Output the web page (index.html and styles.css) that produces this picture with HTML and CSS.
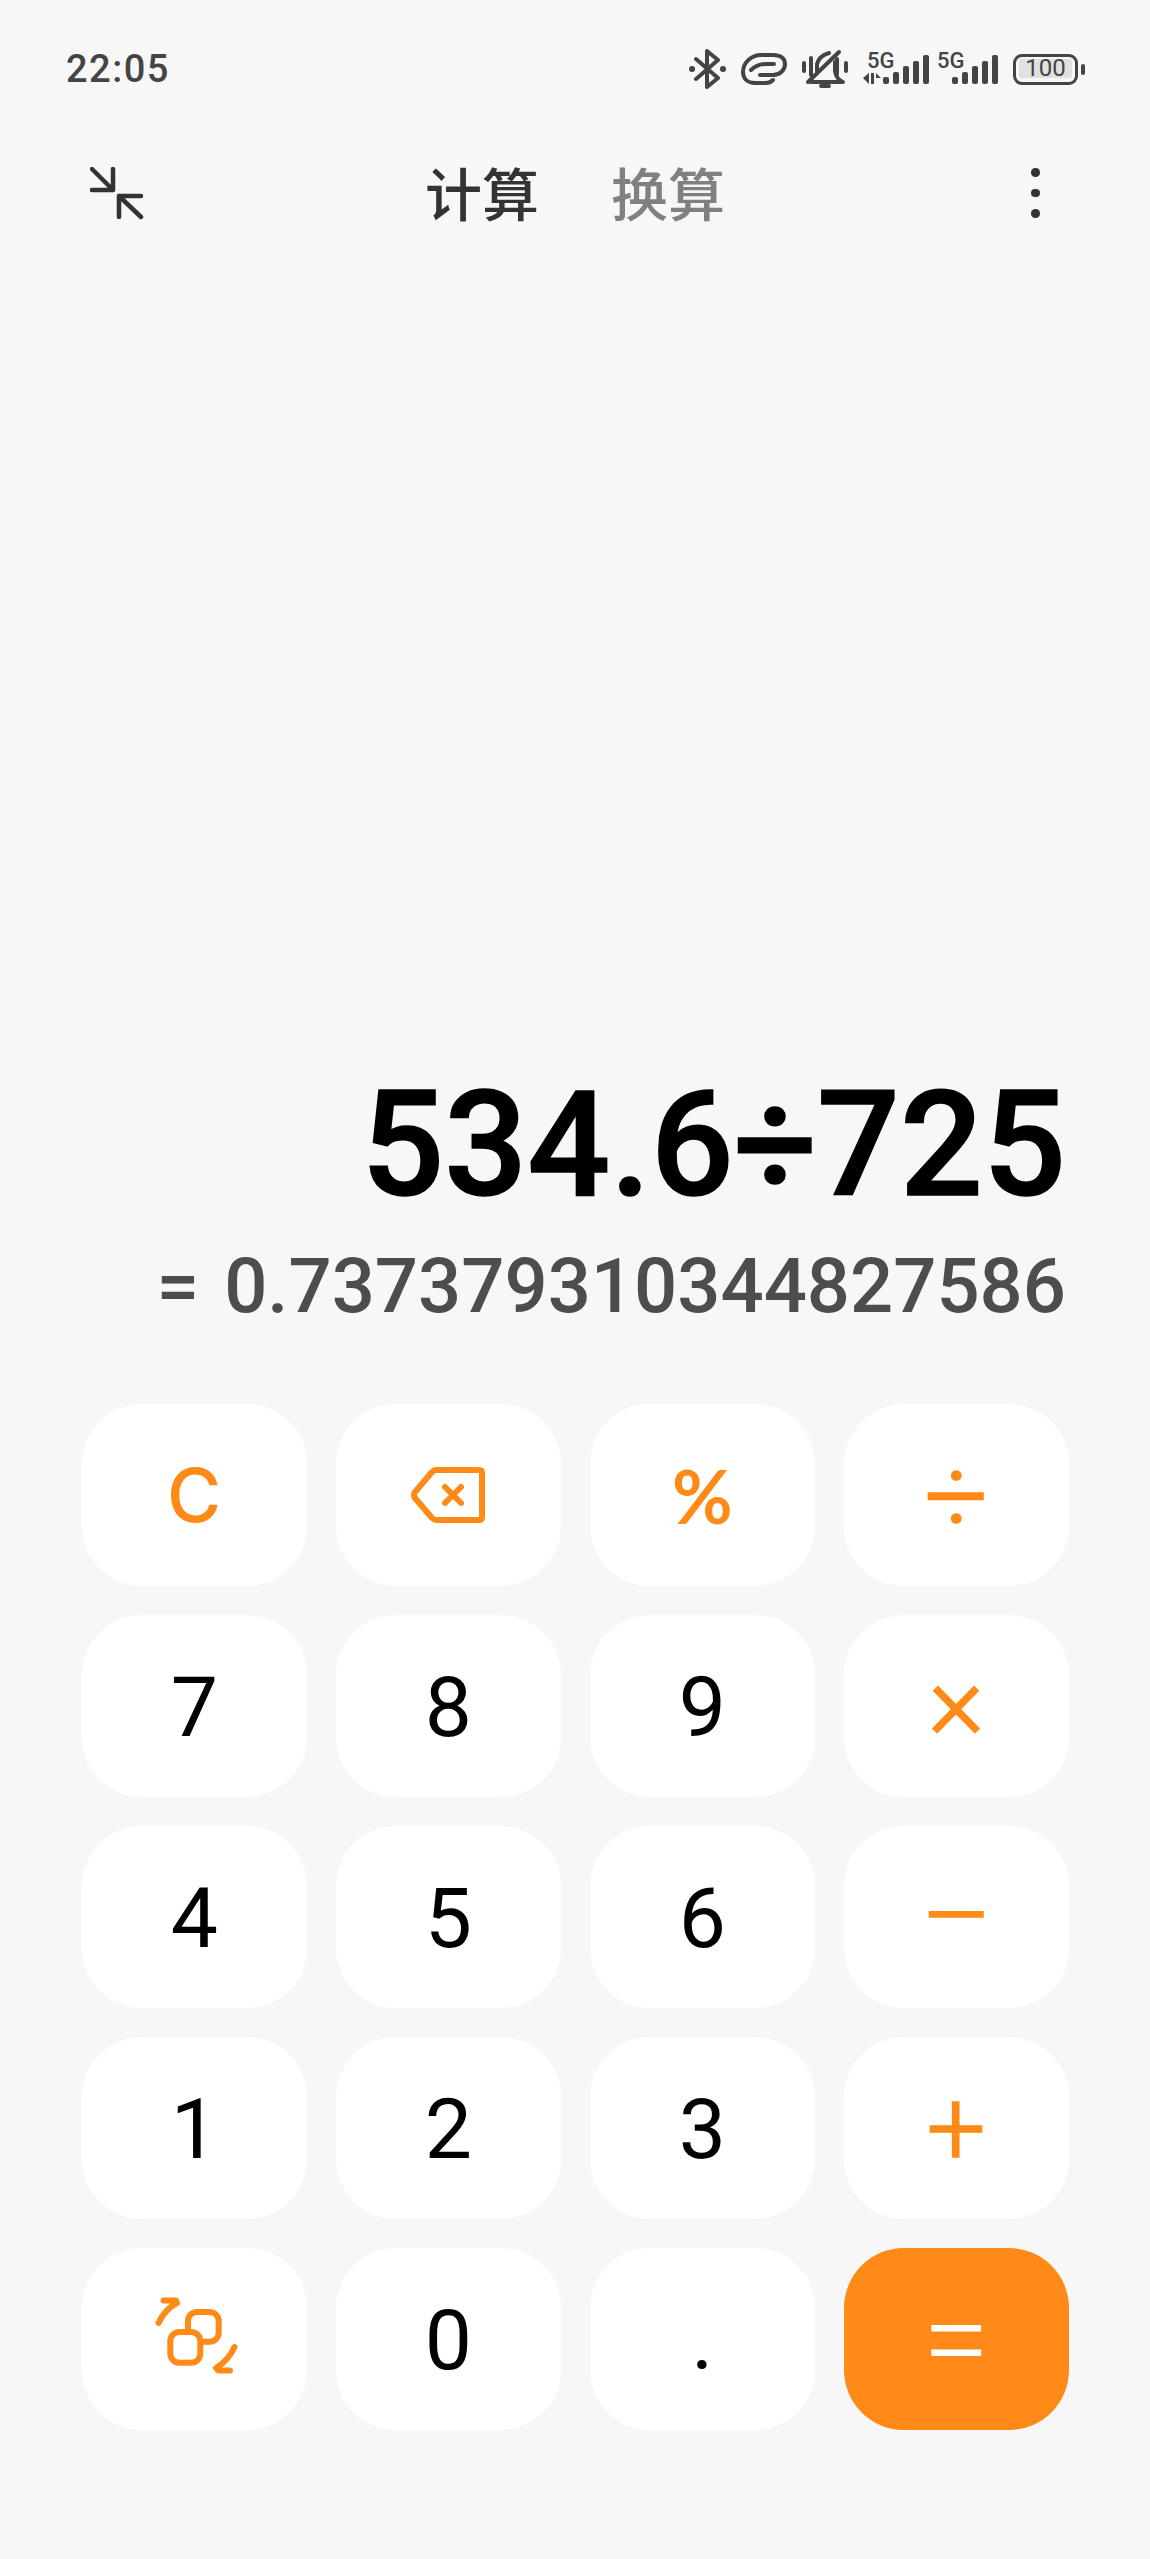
FILE: index.html
```html
<!DOCTYPE html>
<html lang="zh-CN">
<head>
    <meta charset="UTF-8">
    <meta name="viewport" content="width=device-width, initial-scale=1.0">
    <title>计算器</title>
    <link rel="stylesheet" href="styles.css">
</head>
<body>
    <div class="statusbar">
        <span class="clock">22:05</span>
        <div class="status-icons">
            <svg width="37" height="40" viewBox="0 0 37 40" fill="none" stroke="#444" stroke-width="4" stroke-linejoin="round" stroke-linecap="round">
                <path d="M7 10 L29 29 L18 38 V2 L29 11 L7 30"/>
                <path d="M3 20h.1M34 20h.1" stroke-width="6"/>
            </svg>
            <svg width="46" height="34" viewBox="0 0 46 34" fill="none" stroke="#444" stroke-width="4" stroke-linecap="round">
                <path d="M19 23 H32 C39 23 44 18 44 12 C44 6 39 3 32 3 H20 C10 3 2 11 2 20 C2 27 7 31 14 31 H25 C28 31 30 30 32 28"/>
                <path d="M10 18 C14 14 19 12 25 12 H33"/>
            </svg>
            <svg width="46" height="40" viewBox="0 0 46 40" fill="none" stroke="#444" stroke-width="4" stroke-linecap="round" stroke-linejoin="round">
                <path d="M2 14v8M9 9v17M35 10v15M44 14v8"/>
                <path d="M37 3 L6 33"/>
                <path d="M15 22 V15 Q17 7 27 4 M33 13 V22 Q34 30 41 33 H9"/>
                <path d="M19 37 H27"/>
            </svg>
            <div class="signal">
                <span class="net">5G</span>
                <svg width="66" height="29" viewBox="0 0 66 29" fill="#444">
                    <path d="M6 18 v11 l-6-6z M8 18 h3 v11 h-3z M13 18 l5 5 h-5z"/>
                    <rect x="20" y="22" width="6" height="7" rx="2"/>
                    <rect x="30" y="17" width="6" height="12" rx="2"/>
                    <rect x="40" y="11" width="6" height="18" rx="2"/>
                    <rect x="50" y="6" width="6" height="23" rx="2"/>
                    <rect x="60" y="0" width="6" height="29" rx="2"/>
                </svg>
            </div>
            <div class="signal signal-b">
                <span class="net">5G</span>
                <svg width="46" height="29" viewBox="20 0 46 29" fill="#444">
                    <rect x="20" y="22" width="6" height="7" rx="2"/>
                    <rect x="30" y="17" width="6" height="12" rx="2"/>
                    <rect x="40" y="11" width="6" height="18" rx="2"/>
                    <rect x="50" y="6" width="6" height="23" rx="2"/>
                    <rect x="60" y="0" width="6" height="29" rx="2"/>
                </svg>
            </div>
            <div class="battery">
                <div class="battery-body"><span class="battery-fill">100</span></div>
                <div class="battery-cap"></div>
            </div>
        </div>
    </div>

    <div class="toolbar">
        <svg class="shrink" width="54" height="54" viewBox="0 0 54 54" fill="none" stroke="#333" stroke-width="4.5" stroke-linecap="round" stroke-linejoin="round">
            <path d="M2 2 L23 23 M2 23 H23 V2"/>
            <path d="M51 50 L29 29 M29 50 V29 H51"/>
        </svg>
        <div class="tabs">
            <span class="tab tab-active">计算</span>
            <span class="tab">换算</span>
        </div>
        <div class="more"><i></i><i></i><i></i></div>
    </div>

    <div class="display">
        <div class="expression">534.6÷725</div>
        <div class="result">= 0.737379310344827586</div>
    </div>

    <div class="keypad">
        <button class="key op op-c">C</button>
        <button class="key op">
            <svg width="74" height="56" viewBox="0 0 74 56" fill="none" stroke="#ff8a17" stroke-width="6" stroke-linecap="round" stroke-linejoin="round">
                <path d="M25 3 H68 Q71 3 71 6 V50 Q71 53 68 53 H25 Q23 53 21 51 L4 31 Q2 28 4 25 L21 5 Q23 3 25 3Z"/>
                <path d="M34 20 L50 36 M50 20 L34 36"/>
            </svg>
        </button>
        <button class="key op op-pct">%</button>
        <button class="key op op-div">÷</button>

        <button class="key">7</button>
        <button class="key">8</button>
        <button class="key">9</button>
        <button class="key op op-mul">×</button>

        <button class="key">4</button>
        <button class="key">5</button>
        <button class="key">6</button>
        <button class="key op op-minus">−</button>

        <button class="key">1</button>
        <button class="key">2</button>
        <button class="key">3</button>
        <button class="key op op-plus">+</button>

        <button class="key op">
            <svg class="convert" width="83" height="77" viewBox="0 0 83 77" fill="none" stroke="#ff8a17" stroke-width="6" stroke-linecap="round" stroke-linejoin="round">
                <rect x="33" y="15" width="30.7" height="29.7" rx="9"/>
                <rect x="15.3" y="35" width="30" height="30.7" rx="9" fill="#fff"/>
                <path d="M3.5 26 Q10 12 22 6 L21 3.5 H8.5"/>
                <path d="M79.5 50 Q73 64 61 71 L63 73.5 H75"/>
            </svg>
        </button>
        <button class="key">0</button>
        <button class="key">.</button>
        <button class="key key-eq">=</button>
    </div>
</body>
</html>
```
FILE: styles.css
```css
* {
    box-sizing: border-box;
}
body {
    margin: 0;
    height: 2559px;
    background-color: #f7f7f7;
    font-family: Roboto, "Noto Sans CJK SC", sans-serif;
    color: #000;
}
.statusbar {
    display: flex;
    justify-content: space-between;
    align-items: center;
    height: 70px;
    margin-top: 34px;
    padding: 0 65px 0 66px;
}
.clock {
    font-size: 38px;
    font-weight: 500;
    letter-spacing: 1.5px;
    color: #444;
}
.status-icons {
    display: flex;
    align-items: center;
    gap: 15px;
}
.signal {
    position: relative;
    width: 66px;
    height: 30px;
    display: flex;
    align-items: flex-end;
}
.signal-b {
    width: 61px;
    margin-left: -7px;
    justify-content: flex-end;
}
.net {
    position: absolute;
    top: -1px;
    left: 4px;
    font-size: 22px;
    font-weight: 500;
    line-height: 16px;
    color: #444;
}
.signal-b .net {
    left: 0;
}
.battery {
    display: flex;
    align-items: center;
    gap: 3px;
}
.battery-body {
    width: 65px;
    height: 31px;
    border: 3.5px solid #444;
    border-radius: 9px;
    padding: 2.5px 3px;
}
.battery-fill {
    display: block;
    height: 19px;
    border-radius: 3px;
    background-color: #e0e0e0;
    font-size: 24px;
    line-height: 19px;
    text-align: center;
    color: #444;
}
.battery-cap {
    width: 4px;
    height: 11px;
    border-radius: 2px;
    background-color: #444;
}
.toolbar {
    display: flex;
    align-items: center;
    height: 90px;
    margin-top: 45px;
    padding-left: 90px;
}
.shrink {
    flex-shrink: 0;
}
.tabs {
    display: flex;
    gap: 72px;
    margin-bottom: 6px;
    margin-left: 281px;
}
.tab {
    font-size: 57px;
    font-weight: 500;
    color: #808080;
}
.tab-active {
    color: #333;
}
.more {
    display: flex;
    flex-direction: column;
    gap: 12px;
    margin-left: 306px;
    margin-bottom: 2px;
}
.more i {
    display: block;
    width: 8.5px;
    height: 8.5px;
    border-radius: 50%;
    background-color: #333;
}
.display {
    text-align: right;
    padding-right: 84px;
    margin-top: 822px;
}
.expression {
    font-size: 146px;
    font-weight: 500;
    line-height: 170px;
    -webkit-text-stroke: 1.5px #000;
}
.result {
    font-size: 76px;
    font-weight: 500;
    line-height: 90px;
    word-spacing: 6px;
    color: #4d4d4d;
    margin-top: 10px;
    white-space: nowrap;
}
.keypad {
    display: grid;
    grid-template-columns: repeat(4, 224.5px);
    grid-auto-rows: 182px;
    column-gap: 29.5px;
    row-gap: 29px;
    margin-top: 73px;
    padding-left: 82px;
}
.key {
    display: flex;
    align-items: center;
    justify-content: center;
    padding: 3px 0 0;
    border: none;
    border-radius: 60px;
    background-color: #fff;
    font-family: Roboto, sans-serif;
    font-size: 84px;
    font-weight: 400;
    color: #000;
}
.op {
    padding: 0;
    color: #ff8a17;
}
.op-c {
    font-family: Inter, sans-serif;
    font-size: 74px;
    font-weight: 500;
}
.op-pct {
    font-family: Lato, sans-serif;
    font-size: 74px;
    font-weight: 700;
}
.op-div {
    font-size: 112px;
    font-weight: 300;
    -webkit-text-stroke: 1.5px #ff8a17;
}
.op-mul {
    padding-bottom: 11px;
    font-size: 108px;
    font-weight: 300;
    -webkit-text-stroke: 1.5px #ff8a17;
}
.op-minus {
    font-size: 135px;
    font-weight: 300;
}
.op-plus {
    font-size: 105px;
    font-weight: 300;
    -webkit-text-stroke: 1.5px #ff8a17;
}
.convert {
    margin: -7px 0 0 4px;
}
.key-eq {
    padding: 0;
    background-color: #ff8a17;
    color: #fff;
    font-size: 122px;
    font-weight: 300;
}
```
